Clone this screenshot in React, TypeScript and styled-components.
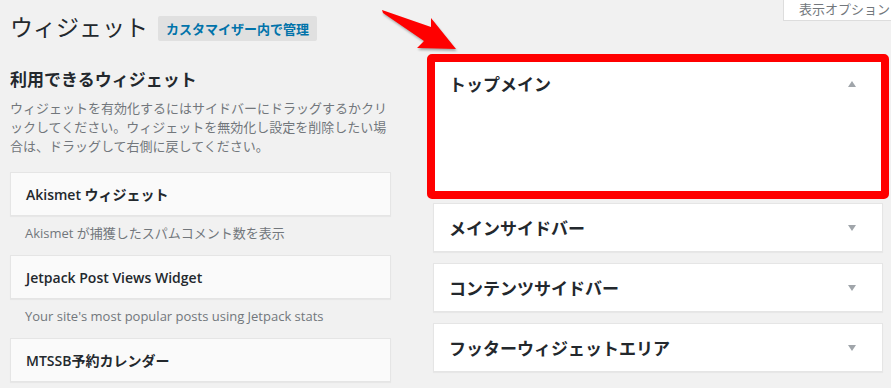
import { FC } from "react";
import styled, { createGlobalStyle } from "styled-components";

const GlobalStyle = createGlobalStyle`
  body {
    margin: 0;
    background: #f1f1f1;
    overflow: hidden;
    font-family: "Open Sans", "Noto Sans CJK JP", sans-serif;
    color: #23282d;
  }
`;

const availableWidgets = [
  { name: "Akismet ウィジェット", desc: "Akismet が捕獲したスパムコメント数を表示" },
  { name: "Jetpack Post Views Widget", desc: "Your site's most popular posts using Jetpack stats" },
  { name: "MTSSB予約カレンダー", desc: "" },
];

const sidebars = ["メインサイドバー", "コンテンツサイドバー", "フッターウィジェットエリア"];

const App: FC = () => {
  return (
    <StyledPage>
      <GlobalStyle />
      <StyledHeader>
        <StyledTitleRow>
          <StyledTitle>ウィジェット</StyledTitle>
          <StyledCustomizerButton>カスタマイザー内で管理</StyledCustomizerButton>
        </StyledTitleRow>
        <StyledScreenOptions>表示オプション</StyledScreenOptions>
      </StyledHeader>

      <StyledColumns>
        <StyledLeftColumn>
          <StyledHeading>利用できるウィジェット</StyledHeading>
          <StyledIntro>
            ウィジェットを有効化するにはサイドバーにドラッグするかクリ
            <br />
            ックしてください。ウィジェットを無効化し設定を削除したい場
            <br />
            合は、ドラッグして右側に戻してください。
          </StyledIntro>
          {availableWidgets.map((w) => (
            <div key={w.name}>
              <StyledWidgetCard>{w.name}</StyledWidgetCard>
              {w.desc && <StyledWidgetDesc>{w.desc}</StyledWidgetDesc>}
            </div>
          ))}
        </StyledLeftColumn>

        <StyledRightColumn>
          <StyledSidebarBox $open>
            <StyledSidebarHeader $open>
              <StyledSidebarName>トップメイン</StyledSidebarName>
              <StyledToggle $up />
            </StyledSidebarHeader>
            <StyledHighlight />
          </StyledSidebarBox>
          {sidebars.map((name) => (
            <StyledSidebarBox key={name}>
              <StyledSidebarHeader>
                <StyledSidebarName>{name}</StyledSidebarName>
                <StyledToggle />
              </StyledSidebarHeader>
            </StyledSidebarBox>
          ))}
        </StyledRightColumn>
      </StyledColumns>

      <StyledArrow width="90" height="52" viewBox="0 0 90 52">
        <polygon points="4,4 53,21 53,12 78,43 39,42 46,35 5,7" fill="#ff0000" />
      </StyledArrow>
    </StyledPage>
  );
};

const StyledPage = styled.div`
  position: relative;
  width: 891px;
  height: 388px;
  padding-left: 10px;
  box-sizing: border-box;
`;

const StyledHeader = styled.div`
  display: flex;
  justify-content: space-between;
  align-items: flex-start;
`;

const StyledTitleRow = styled.div`
  display: flex;
  align-items: center;
  gap: 10px;
  padding-top: 12px;
`;

const StyledTitle = styled.h1`
  margin: 0;
  font-size: 23px;
  line-height: 30px;
  font-weight: 400;
  color: #23282d;
`;

const StyledCustomizerButton = styled.span`
  display: inline-flex;
  align-items: center;
  height: 25px;
  padding: 0 8px;
  background: #e0e0e0;
  border-radius: 2px;
  color: #0073aa;
  font-size: 13px;
  font-weight: 700;
  margin-top: 3px;
`;

const StyledScreenOptions = styled.div`
  width: 108px;
  height: 21px;
  box-sizing: border-box;
  padding-left: 15px;
  background: #fff;
  border: 1px solid #ddd;
  border-top: none;
  border-right: none;
  font-size: 13px;
  line-height: 18px;
  color: #72777c;
  white-space: nowrap;
  overflow: hidden;
`;

const StyledColumns = styled.div`
  display: flex;
  gap: 42px;
  margin-top: 19px;
`;

const StyledLeftColumn = styled.div`
  width: 381px;
  padding-top: 8px;
`;

const StyledHeading = styled.h2`
  margin: 0;
  font-size: 17px;
  line-height: 22px;
  font-weight: 700;
  color: #23282d;
`;

const StyledIntro = styled.p`
  margin: 8px 0 16px;
  font-size: 13px;
  line-height: 19px;
  color: #72777c;
  white-space: nowrap;
`;

const StyledWidgetCard = styled.div`
  height: 44px;
  box-sizing: border-box;
  display: flex;
  align-items: center;
  padding: 0 15px;
  background: #fafafa;
  border: 1px solid #e5e5e5;
  box-shadow: 0 1px 1px rgba(0, 0, 0, 0.04);
  font-size: 14px;
  font-weight: 600;
  color: #23282d;
`;

const StyledWidgetDesc = styled.div`
  padding: 8px 15px 12px;
  font-size: 13px;
  line-height: 19px;
  color: #72777c;
`;

const StyledRightColumn = styled.div`
  width: 450px;
  display: flex;
  flex-direction: column;
  gap: 11px;
`;

const StyledSidebarBox = styled.div<{ $open?: boolean }>`
  position: relative;
  height: ${(p) => (p.$open ? "131px" : "49px")};
  box-sizing: border-box;
  background: #fff;
  border: 1px solid #e5e5e5;
  box-shadow: 0 1px 1px rgba(0, 0, 0, 0.04);
`;

const StyledSidebarHeader = styled.div<{ $open?: boolean }>`
  height: ${(p) => (p.$open ? "43px" : "47px")};
  display: flex;
  align-items: center;
  justify-content: space-between;
  padding: 0 26px 0 15px;
`;

const StyledSidebarName = styled.h3`
  margin: 0;
  font-size: 17px;
  font-weight: 700;
  color: #23282d;
`;

const StyledToggle = styled.span<{ $up?: boolean }>`
  width: 0;
  height: 0;
  border-left: 4px solid transparent;
  border-right: 4px solid transparent;
  ${(p) => (p.$up ? "border-bottom: 6px solid #a0a5aa;" : "border-top: 6px solid #a0a5aa;")}
`;

const StyledHighlight = styled.div`
  position: absolute;
  top: -8px;
  left: -7px;
  right: -7px;
  bottom: -8px;
  border: 8px solid #ff0000;
  border-radius: 5px;
`;

const StyledArrow = styled.svg`
  position: absolute;
  left: 378px;
  top: 6px;
  filter: drop-shadow(1px 2px 1px rgba(0, 0, 0, 0.3));
`;

export default App;
